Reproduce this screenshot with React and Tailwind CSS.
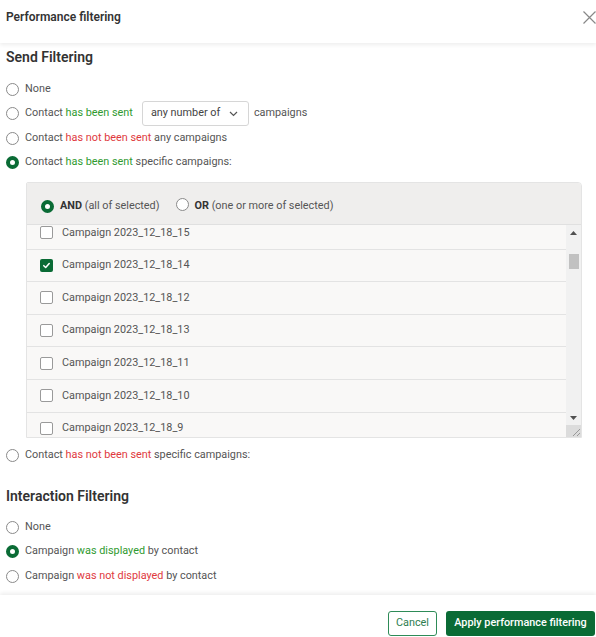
import React from "react";

function Radio({ checked }) {
  return checked ? (
    <span className="box-border inline-block w-[13px] h-[13px] rounded-full border-[4px] border-[#0a6b35] bg-white shrink-0" />
  ) : (
    <span className="box-border inline-block w-[13px] h-[13px] rounded-full border border-[#8a8a8a] bg-white shrink-0" />
  );
}

function Checkbox({ checked }) {
  return checked ? (
    <span className="box-border flex items-center justify-center w-[13px] h-[13px] rounded-[2px] bg-[#0a6b35] shrink-0">
      <svg width="9" height="9" viewBox="0 0 10 10">
        <path d="M2 5.2 L4.1 7.2 L8 2.8" fill="none" stroke="white" strokeWidth="1.7" strokeLinecap="round" strokeLinejoin="round" />
      </svg>
    </span>
  ) : (
    <span className="box-border inline-block w-[13px] h-[13px] rounded-[2px] border border-[#9a9a9a] bg-white shrink-0" />
  );
}

const G = ({ children }) => <span className="text-[#2f9a2f]">{children}</span>;
const R = ({ children }) => <span className="text-[#e0393e]">{children}</span>;

function Row({ checked, children, h = "h-[24px]" }) {
  return (
    <div className={`flex items-center gap-[6px] ${h}`}>
      <Radio checked={checked} />
      {children ? (
        <span className="text-[10.85px] text-[#555] whitespace-nowrap">{children}</span>
      ) : null}
    </div>
  );
}

const campaigns = [
  ["Campaign 2023_12_18_15", false],
  ["Campaign 2023_12_18_14", true],
  ["Campaign 2023_12_18_12", false],
  ["Campaign 2023_12_18_13", false],
  ["Campaign 2023_12_18_11", false],
  ["Campaign 2023_12_18_10", false],
  ["Campaign 2023_12_18_9", false],
];

export default function App() {
  return (
    <div className="w-[596px] h-[637px] flex flex-col bg-white overflow-hidden font-['Roboto',sans-serif]">
      {/* Header */}
      <div className="relative z-10 h-[43px] shrink-0 flex items-start justify-between pl-[6px] pt-[9px] shadow-[0_2px_4px_rgba(0,0,0,0.07)]">
        <span className="text-[12px] leading-[16px] font-semibold text-[#333]">Performance filtering</span>
        <svg width="13" height="13" viewBox="0 0 13 13" className="mt-[2px]">
          <path d="M0.5 0.5 L12.5 12.5 M12.5 0.5 L0.5 12.5" stroke="#888" strokeWidth="1.2" />
        </svg>
      </div>

      {/* Body */}
      <div className="flex-1 overflow-hidden px-[6px] pt-[5px]">
        <div className="text-[14px] leading-[18px] font-semibold text-[#333]">Send Filtering</div>
        <div className="mt-[11px]">
          <Row>None</Row>
          <div className="flex items-center gap-[6px] h-[25px]">
            <Radio />
            <span className="text-[10.85px] text-[#555] whitespace-nowrap">
              Contact <G>has been sent</G>
            </span>
            <div className="box-border ml-[3px] w-[107px] h-[25px] border border-[#d6d6d6] rounded-[3px] flex items-center justify-between pl-[8px] pr-[10px]">
              <span className="text-[10.85px] text-[#444]">any number of</span>
              <svg width="9" height="6" viewBox="0 0 9 6">
                <path d="M1 1 L4.5 4.5 L8 1" fill="none" stroke="#555" strokeWidth="1.2" />
              </svg>
            </div>
            <span className="text-[10.85px] text-[#555] ml-[-1px]">campaigns</span>
          </div>
          <Row>
            Contact <R>has not been sent</R> any campaigns
          </Row>
          <Row checked>
            Contact <G>has been sent</G> specific campaigns:
          </Row>
        </div>

        {/* Panel */}
        <div className="box-border mt-[8px] ml-[20px] w-[556px] border border-[#e4e4e4] rounded-tr-[4px] rounded-tl-[2px] overflow-hidden">
          <div className="h-[42px] bg-[#efeeed] border-b border-[#e0e0e0] flex items-center pl-[14px] pt-[5px] gap-[6px]">
            <Radio checked />
            <span className="text-[10.85px] text-[#555] whitespace-nowrap">
              <span className="font-bold text-[#333]">AND</span> (all of selected)
            </span>
            <span className="ml-[10px]"><Radio /></span>
            <span className="text-[10.85px] text-[#555] whitespace-nowrap">
              <span className="font-bold text-[#333]">OR</span> (one or more of selected)
            </span>
          </div>
          <div className="flex h-[212px]">
            <div className="flex-1 overflow-hidden bg-[#f9f8f7]">
              <div className="mt-[-8px]">
                {campaigns.map(([name, c]) => (
                  <div key={name} className="box-border h-[32.6px] border-b border-[#e3e3e3] flex items-center pl-[13px] gap-[9px]">
                    <Checkbox checked={c} />
                    <span className="text-[10.85px] text-[#555]">{name}</span>
                  </div>
                ))}
              </div>
            </div>
            <div className="w-[15px] bg-[#f1f1f1] flex flex-col items-center">
              <div className="h-[15px] flex items-center justify-center">
                <svg width="7" height="4" viewBox="0 0 7 4"><path d="M0 4 L3.5 0 L7 4 Z" fill="#505050" /></svg>
              </div>
              <div className="mt-[14px] w-[10px] h-[15px] bg-[#c1c1c1]" />
              <div className="flex-1" />
              <div className="h-[15px] flex items-center justify-center">
                <svg width="7" height="4" viewBox="0 0 7 4"><path d="M0 0 L7 0 L3.5 4 Z" fill="#505050" /></svg>
              </div>
              <div className="w-[15px] h-[12px] bg-[#dcdcdc] flex items-end justify-end">
                <svg width="10" height="10" viewBox="0 0 10 10">
                  <path d="M9 2 L2 9 M9 6 L6 9" stroke="#999" strokeWidth="1" />
                </svg>
              </div>
            </div>
          </div>
        </div>

        <div className="mt-[5px]">
          <Row>
            Contact <R>has not been sent</R> specific campaigns:
          </Row>
        </div>

        <div className="mt-[20px] text-[14px] leading-[18px] font-semibold text-[#333]">Interaction Filtering</div>
        <div className="mt-[10px]">
          <Row>None</Row>
          <Row checked h="h-[25px]">
            Campaign <G>was displayed</G> by contact
          </Row>
          <Row h="h-[25px]">
            Campaign <R>was not displayed</R> by contact
          </Row>
          <Row />
        </div>
      </div>

      {/* Footer */}
      <div className="relative z-10 h-[42px] shrink-0 bg-white flex items-start justify-end gap-[9px] pt-[16px] pr-[1px] shadow-[0_-2px_4px_rgba(0,0,0,0.07)]">
        <button className="box-border h-[25px] w-[49px] border border-[#2e8b57] rounded-[3px] text-[10.85px] text-[#2e7d4f] bg-white">
          Cancel
        </button>
        <button className="box-border h-[25px] w-[149px] rounded-[3px] text-[10.85px] font-medium text-white bg-[#0a6b35]">
          Apply performance filtering
        </button>
      </div>
    </div>
  );
}
